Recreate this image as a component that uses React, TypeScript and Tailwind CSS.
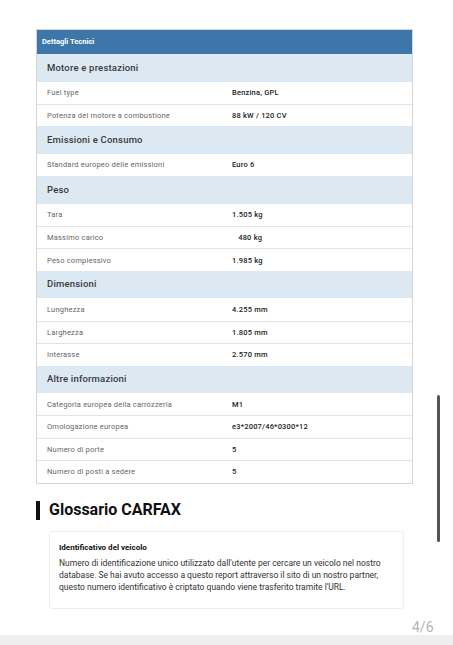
import React from 'react';

type Row = { label: string; value: string };
type Section = { title: string; rows: Row[] };

const sections: Section[] = [
  {
    title: 'Motore e prestazioni',
    rows: [
      { label: 'Fuel type', value: 'Benzina, GPL' },
      { label: 'Potenza del motore a combustione', value: '88 kW / 120 CV' },
    ],
  },
  {
    title: 'Emissioni e Consumo',
    rows: [{ label: 'Standard europeo delle emissioni', value: 'Euro 6' }],
  },
  {
    title: 'Peso',
    rows: [
      { label: 'Tara', value: '1.505 kg' },
      { label: 'Massimo carico', value: '\u00a0\u00a0\u00a0480 kg' },
      { label: 'Peso complessivo', value: '1.985 kg' },
    ],
  },
  {
    title: 'Dimensioni',
    rows: [
      { label: 'Lunghezza', value: '4.255 mm' },
      { label: 'Larghezza', value: '1.805 mm' },
      { label: 'Interasse', value: '2.570 mm' },
    ],
  },
  {
    title: 'Altre informazioni',
    rows: [
      { label: 'Categoria europea della carrozzeria', value: 'M1' },
      { label: 'Omologazione europea', value: 'e3*2007/46*0300*12' },
      { label: 'Numero di porte', value: '5' },
      { label: 'Numero di posti a sedere', value: '5' },
    ],
  },
];

export default function App() {
  return (
    <div className="relative w-[453px] h-[645px] bg-white overflow-hidden font-['Roboto',sans-serif]">
      <div className="pt-[29px] pl-[36px] w-[413px]">
        {/* Technical details table */}
        <div className="border border-[#d6d6d6]">
          <div className="h-[24px] bg-[#3d77a9] flex items-center px-[5px] text-[7.5px] font-bold text-white">
            Dettagli Tecnici
          </div>
          {sections.map((s) => (
            <div key={s.title}>
              <div className="h-[27.5px] bg-[#dce8f2] flex items-center px-[10px] text-[9.5px] font-medium text-[#3a3a3a] tracking-[0.2px]">
                {s.title}
              </div>
              {s.rows.map((r, i) => (
                <div
                  key={r.label}
                  className={`h-[22.4px] flex items-center px-[10px] text-[7.5px] ${i > 0 ? 'border-t border-[#e4e4e4]' : ''}`}
                >
                  <span className="w-[185px] text-[#666] tracking-[0.2px]">{r.label}</span>
                  <span className="font-medium text-[#222] tracking-[0.2px] whitespace-pre">{r.value}</span>
                </div>
              ))}
            </div>
          ))}
        </div>

        {/* Glossary */}
        <div className="mt-[17px] flex items-center gap-[9px]">
          <div className="w-[4px] h-[19px] bg-[#111]" />
          <h2 className="text-[16px] font-bold text-[#111] leading-none">Glossario CARFAX</h2>
        </div>
        <div className="ml-[13px] mt-[11px] w-[355px] h-[78px] border border-[#efefef] rounded-[3px] px-[9px] pt-[10px] shadow-[0_0_2px_rgba(0,0,0,0.04)]">
          <div className="text-[8px] font-bold text-[#111] leading-[12px] mb-[3px]">Identificativo del veicolo</div>
          <p className="text-[8.5px] text-[#333] leading-[12px]">
            Numero di identificazione unico utilizzato dall'utente per cercare un veicolo nel nostro database. Se hai
            avuto accesso a questo report attraverso il sito di un nostro partner, questo numero identificativo è
            criptato quando viene trasferito tramite l'URL.
          </p>
        </div>
      </div>

      {/* Scrollbar */}
      <div className="absolute left-[437px] top-[395px] w-[3px] h-[147px] rounded-full bg-[#555]" />

      {/* Page indicator */}
      <div className="absolute left-[412px] top-[620px] text-[14px] text-[#b5b5b5] leading-none">4/6</div>
      <div className="absolute left-0 bottom-0 w-full h-[10px] bg-[#eeeeee]" />
    </div>
  );
}
